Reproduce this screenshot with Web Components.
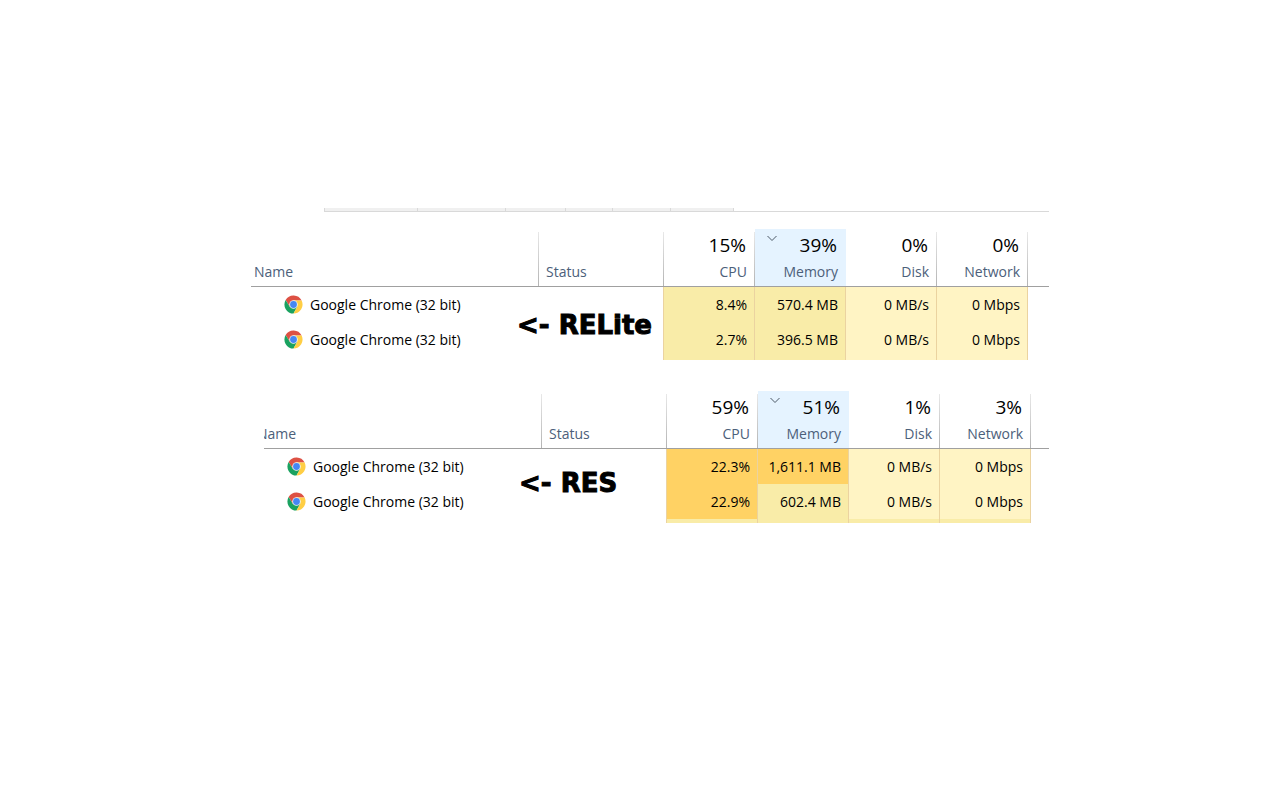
<!DOCTYPE html>
<html lang="en">
<head>
<meta charset="utf-8">
<title>Memory usage comparison</title>
<style>
body {
    margin: 0;
    background: white;
    font-family: "Open Sans", "Noto Sans", sans-serif;
    font-size: 14px;
}
</style>
</head>
<body>
<usage-comparison>
    <tab-strip></tab-strip>
    <usage-table cpu="15%" memory="39%" disk="0%" network="0%">
        <usage-note slot="note">&lt;- RELite</usage-note>
    </usage-table>
    <usage-table class="cropped" cpu="59%" memory="51%" disk="1%" network="3%">
        <usage-note slot="note">&lt;- RES</usage-note>
    </usage-table>
</usage-comparison>

<script>
const comparisonTemplate = document.createElement("template")
comparisonTemplate.innerHTML = `
<style>
:host {
    display: flex;
    flex-direction: column;
    padding: 208px 231px 32px 251px;
}
::slotted(tab-strip) {
    margin: 0 0 17px 73px;
}
::slotted(usage-table) {
    margin-bottom: 31px;
}
::slotted(.cropped) {
    --name-shift: -10px;
    --icon-shift: 22px;
    --tail: 18px;
    --note-top: 76px;
    --note-width: 530px;
    margin-left: 13px;
}
</style>
<slot></slot>
`

class UsageComparison extends HTMLElement {
    constructor() {
        super()
        const shadow = this.attachShadow({ mode: "open" })
        shadow.append(comparisonTemplate.content.cloneNode(true))
    }
}

// bottom edge of the window's tabs
const tabsTemplate = document.createElement("template")
tabsTemplate.innerHTML = `
<style>
:host {
    display: flex;
    height: 3px;
    border-bottom: 1px solid #d9d9d9;
}
span {
    box-sizing: border-box;
    background: #f0f0f0;
    border-left: 1px solid #d9d9d9;
}
span:last-child {
    border-right: 1px solid #d9d9d9;
}
</style>
`

class TabStrip extends HTMLElement {
    constructor() {
        super()
        const shadow = this.attachShadow({ mode: "open" })
        shadow.append(tabsTemplate.content.cloneNode(true))
        for (const width of [93, 88, 60, 47, 58, 64]) {
            const tab = document.createElement("span")
            tab.style.width = `${width}px`
            shadow.append(tab)
        }
    }
}

const noteTemplate = document.createElement("template")
noteTemplate.innerHTML = `
<style>
:host {
    display: block;
    color: black;
    font: bold 26px/32px "DejaVu Sans", sans-serif;
    -webkit-text-stroke: 1px black;
    white-space: nowrap;
}
</style>
<slot></slot>
`

class UsageNote extends HTMLElement {
    constructor() {
        super()
        const shadow = this.attachShadow({ mode: "open" })
        shadow.append(noteTemplate.content.cloneNode(true))
    }
}

const iconTemplate = document.createElement("template")
iconTemplate.innerHTML = `
<style>
:host {
    display: block;
    width: 19px;
    height: 19px;
}
svg {
    display: block;
}
</style>
<svg width="19" height="19" viewBox="0 0 48 48" aria-hidden="true">
    <path fill="#dd5144" d="M24 24 14.500 29.500 4.100 12.500A23 23 0 0 1 44.500 13.800H24z"/>
    <path fill="#1aa260" d="M4.100 12.500A23 23 0 0 0 24 47L33.500 29.500 24 24 14.500 29.500z"/>
    <path fill="#ffce44" d="M24 13.800H44.500A23 23 0 0 1 24 47L33.500 29.500z"/>
    <circle cx="24" cy="24" r="10.800" fill="#f1f1f1"/>
    <circle cx="24" cy="24" r="8.600" fill="#4587f4"/>
</svg>
`

class ChromeIcon extends HTMLElement {
    constructor() {
        super()
        const shadow = this.attachShadow({ mode: "open" })
        shadow.append(iconTemplate.content.cloneNode(true))
    }
}

const tableTemplate = document.createElement("template")
tableTemplate.innerHTML = `
<style>
:host {
    display: block;
    position: relative;
}
table {
    width: 100%;
    table-layout: fixed;
    border-collapse: separate;
    border-spacing: 0;
}
.status {
    width: 125px;
}
.metric {
    width: 91px;
}
.tail {
    width: var(--tail, 21px);
}
th, td {
    box-sizing: border-box;
    padding: 0;
    font-weight: normal;
    white-space: nowrap;
}
th {
    height: 58px;
    border-bottom: 1px solid #a0a0a0;
    background: linear-gradient(#e8e8e8, #b4b4b4) right bottom / 1px 54px no-repeat;
    vertical-align: bottom;
    overflow: hidden;
}
th:last-child {
    background: none;
}
th.sorted {
    background: #e5f3ff;
}
button {
    display: block;
    width: 100%;
    padding: 3px 8px 1px 7px;
    border: 0;
    background: none;
    color: #4c607a;
    font: inherit;
    line-height: 27px;
    text-align: left;
}
.name-button {
    padding-left: 3px;
    text-indent: var(--name-shift, 0);
}
.number button {
    text-align: right;
}
.total {
    display: flex;
    justify-content: flex-end;
    padding-right: 1px;
    color: black;
    font-size: 19px;
    line-height: 26px;
}
.sorted .total {
    justify-content: space-between;
}
.total svg {
    margin: 1px 5px;
}
.label {
    display: block;
}
td {
    height: 35px;
    line-height: 35px;
    color: black;
}
.app {
    display: flex;
    align-items: center;
    gap: 7px;
    padding-left: var(--icon-shift, 32px);
}
.app chrome-icon {
    margin: 0 0 1px 1px;
}
td.number, td.edge {
    border-right: 1px solid #ebd3a0;
}
td.number {
    padding-right: 7px;
    text-align: right;
}
.low {
    background: #fff4c4;
}
.mid {
    background: #f9eca8;
}
.high {
    background: #ffd264;
}
/* the next row only shows its top edge */
.rest td {
    height: var(--rest, 3px);
    line-height: 0;
}
.note {
    position: absolute;
    top: var(--note-top, 80px);
    right: 0;
    width: var(--note-width, 532px);
}
</style>
<table>
    <colgroup>
        <col>
        <col class="status">
        <col class="metric">
        <col class="metric">
        <col class="metric">
        <col class="metric">
        <col class="tail">
    </colgroup>
    <thead>
        <tr>
            <th><button class="name-button" type="button">Name</button></th>
            <th><button type="button">Status</button></th>
        </tr>
    </thead>
    <tbody></tbody>
</table>
<div class="note"><slot name="note"></slot></div>
`

const chevron = `<svg width="10" height="10" viewBox="0 0 10 10" aria-hidden="true"><path d="M.5 3 5 7.500 9.500 3" fill="none" stroke="#4c5866"/></svg>`

class UsageTable extends HTMLElement {
    constructor() {
        super()
        const shadow = this.attachShadow({ mode: "open" })
        shadow.append(tableTemplate.content.cloneNode(true))
    }

    connectedCallback() {
        this.renderHeader()
        this.renderRows(usage[this.getAttribute("memory")])
    }

    renderHeader() {
        const row = this.shadowRoot.querySelector("thead tr")
        for (const name of ["CPU", "Memory", "Disk", "Network"]) {
            const sorted = name === "Memory"
            const th = document.createElement("th")
            th.className = sorted ? "number sorted" : "number"
            th.innerHTML = `<button type="button"><span class="total">${sorted ? chevron : ""}<span>${this.getAttribute(name)}</span></span><span class="label">${name}</span></button>`
            row.append(th)
        }
        row.append(document.createElement("th"))
    }

    renderRows({ rows, rest, restHeight }) {
        const body = this.shadowRoot.querySelector("tbody")
        for (const cells of rows) {
            body.insertAdjacentHTML("beforeend", `
            <tr>
                <td><div class="app"><chrome-icon></chrome-icon>Google Chrome (32 bit)</div></td>
                <td class="edge"></td>
                ${cells.map(([text, level]) => `<td class="number ${level}">${text}</td>`).join("")}
                <td></td>
            </tr>`)
        }
        this.style.setProperty("--rest", restHeight)
        body.insertAdjacentHTML("beforeend", `
        <tr class="rest">
            <td></td>
            <td class="edge"></td>
            ${rest.map(level => `<td class="number ${level}"></td>`).join("")}
            <td></td>
        </tr>`)
    }
}

// readings, by the total memory load they were taken at
const usage = {
    "39%": {
        rows: [
            [["8.4%", "mid"], ["570.4 MB", "mid"], ["0 MB/s", "low"], ["0 Mbps", "low"]],
            [["2.7%", "mid"], ["396.5 MB", "mid"], ["0 MB/s", "low"], ["0 Mbps", "low"]]
        ],
        rest: ["mid", "mid", "low", "low"],
        restHeight: "3px"
    },
    "51%": {
        rows: [
            [["22.3%", "high"], ["1,611.1 MB", "high"], ["0 MB/s", "low"], ["0 Mbps", "low"]],
            [["22.9%", "high"], ["602.4 MB", "mid"], ["0 MB/s", "low"], ["0 Mbps", "low"]]
        ],
        rest: ["mid", "mid", "mid", "mid"],
        restHeight: "4px"
    }
}

customElements.define("usage-comparison", UsageComparison)
customElements.define("tab-strip", TabStrip)
customElements.define("usage-note", UsageNote)
customElements.define("chrome-icon", ChromeIcon)
customElements.define("usage-table", UsageTable)
</script>
</body>
</html>
